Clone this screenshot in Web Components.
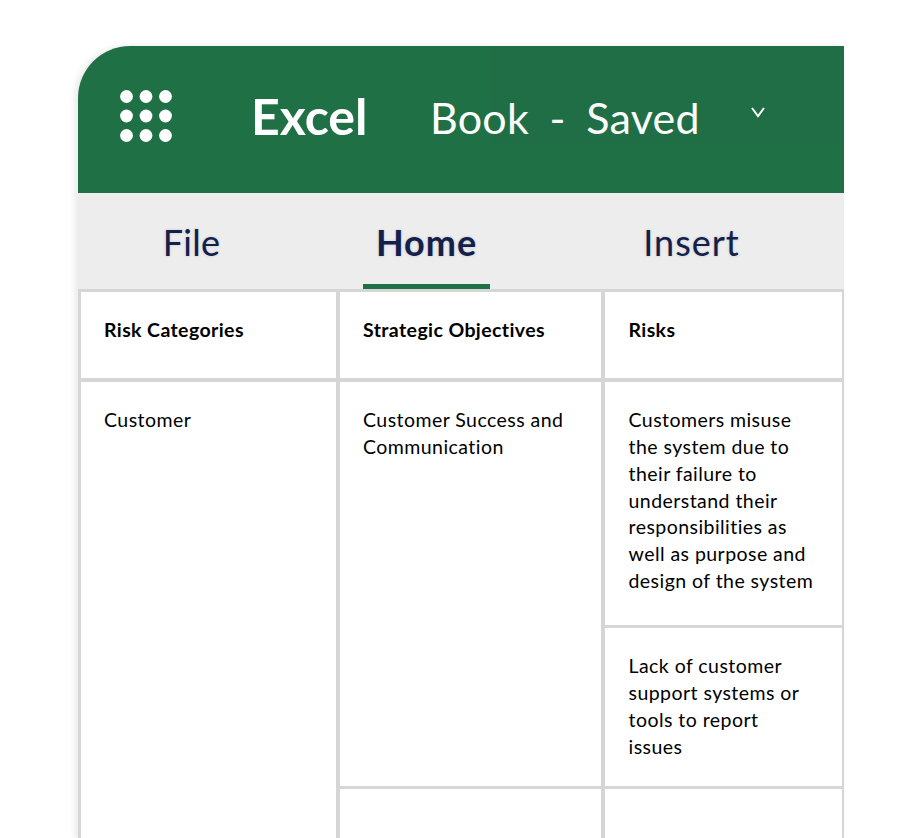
<!DOCTYPE html>
<html lang="en">
<head>
<meta charset="utf-8">
<title>Excel</title>
<style>
html, body { margin: 0; height: 838px; overflow: hidden; background: #fff; }
body { font-family: Lato, "Open Sans", sans-serif; }
</style>
</head>
<body>
<excel-app>
    <excel-header slot="header" app="Excel" doc="Book  -  Saved"></excel-header>
    <excel-tabs slot="tabs">
        <excel-tab style="--w:227px;--ls:0.3px">File</excel-tab>
        <excel-tab style="--w:127px;--ls:1px" active>Home</excel-tab>
        <excel-tab style="--w:287px;--ls:1px">Insert</excel-tab>
    </excel-tabs>
    <excel-table slot="table">
        <excel-cell head style="--bb:4px">Risk Categories</excel-cell>
        <excel-cell head style="--bb:4px">Strategic Objectives</excel-cell>
        <excel-cell head style="--bb:4px;--br:2px;--pl:23.5px;--pr:27px">Risks</excel-cell>

        <excel-cell style="grid-row:2 / span 3;--bb:0px">Customer</excel-cell>
        <excel-cell style="grid-row:2 / span 2">Customer Success and Communication</excel-cell>
        <excel-cell style="--br:2px;--pl:23.5px;--pr:27px">Customers misuse the system due to their failure to understand their responsibilities as well as purpose and design of the system</excel-cell>
        <excel-cell style="--br:2px;--pl:23.5px;--pr:27px">Lack of customer support systems or tools to report issues</excel-cell>
        <excel-cell style="--bb:0px"></excel-cell>
        <excel-cell style="--br:2px;--pl:23.5px;--pr:27px;--bb:0px"></excel-cell>
    </excel-table>
</excel-app>

<script>
class ExcelApp extends HTMLElement {
    constructor() {
        super();
        this.attachShadow({ mode: "open" });
        this.shadowRoot.innerHTML = `
<style>
:host {
    display: flex;
    flex-direction: column;
    width: 766px;
    height: 792px;
    margin: 46px 0 0 78px;
    background: #fff;
    border-top-left-radius: 52px;
    box-shadow: -3px 0 6px rgba(0, 0, 0, 0.09);
}
</style>
<slot name="header"></slot>
<slot name="tabs"></slot>
<slot name="table"></slot>
`;
    }
}

class ExcelHeader extends HTMLElement {
    constructor() {
        super();
        this.attachShadow({ mode: "open" });
    }

    connectedCallback() {
        let dots = "";
        for (const cy of [6.5, 26, 45.5]) {
            for (const cx of [6.5, 26, 45.5]) {
                dots += `<circle cx="${cx}" cy="${cy}" r="6.4"/>`;
            }
        }
        this.shadowRoot.innerHTML = `
<style>
:host {
    display: flex;
    position: relative;
    align-items: flex-start;
    height: 147px;
    padding: 44px 0 0 42px;
    box-sizing: border-box;
    background: #207046;
    color: #fff;
    border-top-left-radius: 52px;
    white-space: pre;
}
svg { flex: none; display: block; }
.dots { width: 52px; height: 52px; fill: #fff; }
.app {
    margin: -8px 0 0 79px;
    width: 179px;
    font-size: 50px;
    font-weight: 700;
    line-height: 68px;
}
.doc {
    margin-top: -6px;
    width: 320px;
    font-size: 43px;
    line-height: 68px;
    letter-spacing: 0.25px;
    word-spacing: -1px;
}
.chevron { width: 16px; height: 12px; margin-top: 16px; fill: none; stroke: #fff; stroke-width: 2; }
.shade {
    position: absolute;
    left: 414px;
    right: 0;
    top: 0;
    height: 97px;
    background: rgba(0, 0, 0, 0.012);
}
</style>
<div class="shade"></div>
<svg class="dots" viewBox="0 0 52 52">${dots}</svg>
<span class="app">${this.getAttribute("app")}</span>
<span class="doc">${this.getAttribute("doc")}</span>
<svg class="chevron" viewBox="0 0 16 12"><path d="M2 2l6 8 6-8"/></svg>
`;
    }
}

class ExcelTabs extends HTMLElement {
    constructor() {
        super();
        this.attachShadow({ mode: "open" });
        this.shadowRoot.innerHTML = `
<style>
:host {
    display: flex;
    gap: 58px;
    height: 96px;
    background: #ededed;
}
</style>
<slot></slot>
`;
    }
}

class ExcelTab extends HTMLElement {
    constructor() {
        super();
        this.attachShadow({ mode: "open" });
        this.shadowRoot.innerHTML = `
<style>
:host {
    display: flex;
    justify-content: center;
    box-sizing: border-box;
    width: var(--w);
    height: 96px;
    padding-top: 24px;
    font-size: 36px;
    line-height: 50px;
    letter-spacing: var(--ls, 0);
    color: #12204a;
    text-shadow: 0 0 3px rgba(20, 33, 63, 0.18);
}
:host([active]) {
    font-weight: 700;
    border-bottom: 5px solid #207046;
}
</style>
<slot></slot>
`;
    }
}

class ExcelTable extends HTMLElement {
    constructor() {
        super();
        this.attachShadow({ mode: "open" });
        this.shadowRoot.innerHTML = `
<style>
:host {
    display: grid;
    grid-template-columns: 259px 265px 239px;
    grid-template-rows: 90px 246px 161px 1fr;
    flex: 1;
    min-height: 0;
    border-top: 3px solid #d6d6d6;
    border-left: 3px solid #d6d6d6;
}
</style>
<slot></slot>
`;
    }
}

class ExcelCell extends HTMLElement {
    constructor() {
        super();
        this.attachShadow({ mode: "open" });
        this.shadowRoot.innerHTML = `
<style>
:host {
    display: block;
    box-sizing: border-box;
    padding: 25px var(--pr, 20px) 0 var(--pl, 23px);
    border-right: var(--br, 4px) solid #d6d6d6;
    border-bottom: var(--bb, 3px) solid #d6d6d6;
    background: #fff;
    color: #000;
    font-size: 19.5px;
    line-height: 26.85px;
    letter-spacing: 0.45px;
}
:host([head]) {
    font-weight: 700;
    letter-spacing: 0.4px;
}
</style>
<slot></slot>
`;
    }
}

customElements.define("excel-app", ExcelApp);
customElements.define("excel-header", ExcelHeader);
customElements.define("excel-tabs", ExcelTabs);
customElements.define("excel-tab", ExcelTab);
customElements.define("excel-table", ExcelTable);
customElements.define("excel-cell", ExcelCell);
</script>
</body>
</html>
